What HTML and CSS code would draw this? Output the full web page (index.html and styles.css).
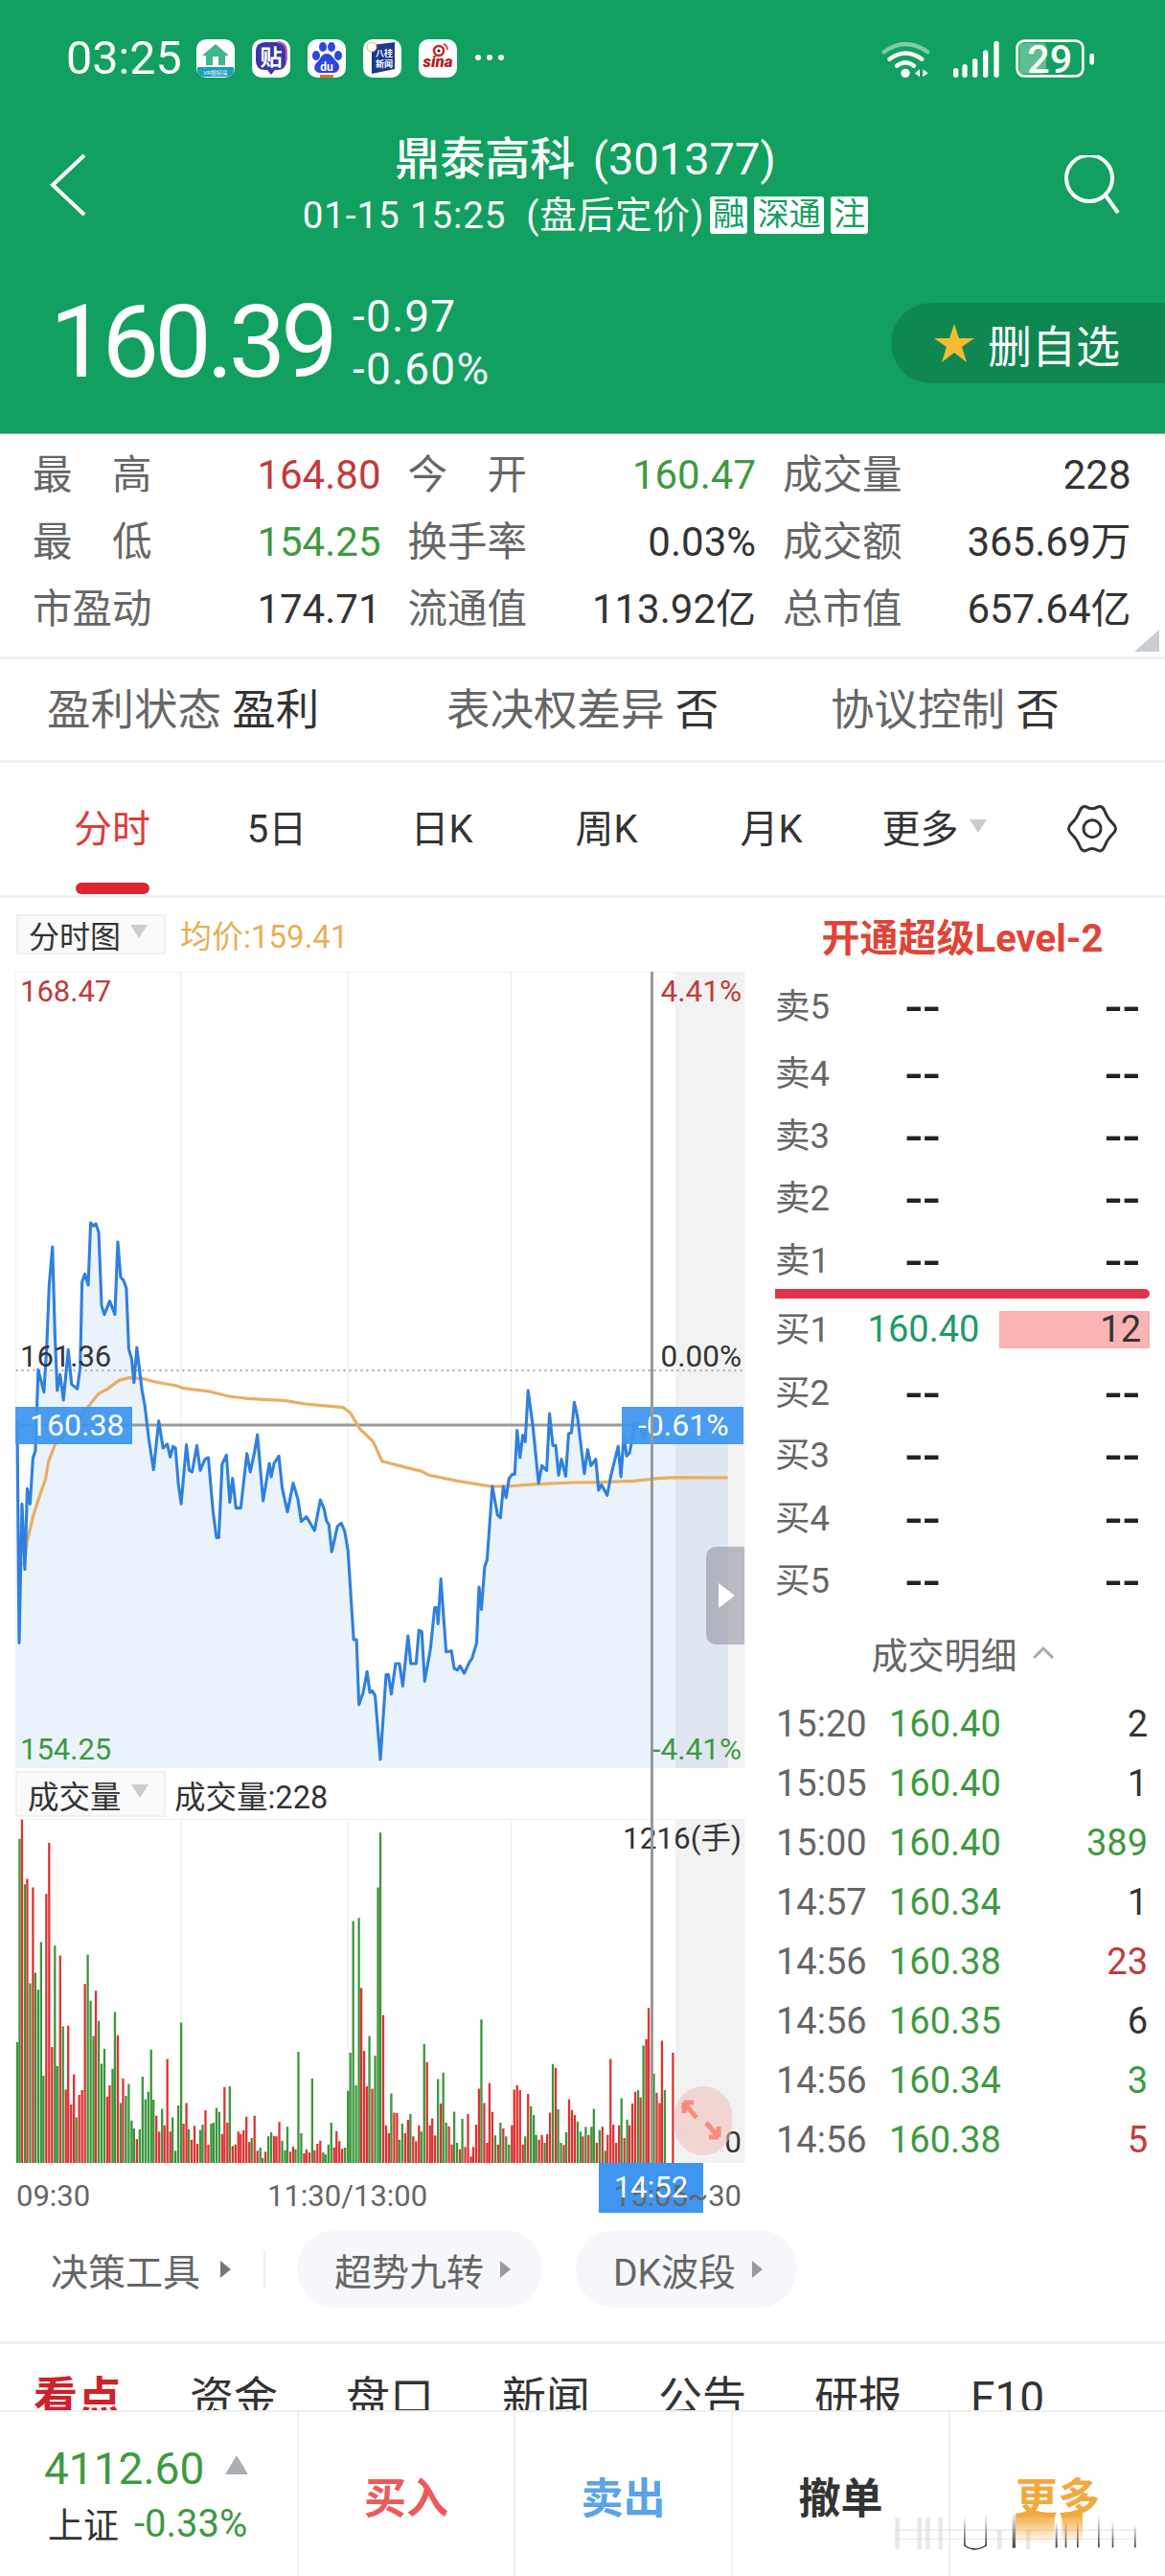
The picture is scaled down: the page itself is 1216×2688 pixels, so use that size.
FILE: index.html
```html
<!DOCTYPE html>
<html lang="zh-CN">
<head>
<meta charset="utf-8">
<title>鼎泰高科 (301377)</title>
<link rel="stylesheet" href="styles.css">
</head>
<body>
<div class="page">
  <header class="hero">
    <div class="status">
      <span class="clock">03:25</span>
      <div class="apps">
        <svg class="app" viewBox="0 0 40 40"><path d="M20 5 34 17H30V27H10V17H6Z" fill="#3DB58F"/><rect x="17" y="18" width="6" height="9" fill="#fff"/><path d="M1 29H39V32Q39 39 32 39H8Q1 39 1 32Z" fill="#1E9BBE"/><text class="app-tiny" x="20" y="37" text-anchor="middle">VR搜好房</text></svg>
        <svg class="app" viewBox="0 0 40 40"><path d="M14 3H26Q36 3 36 13V22Q36 32 26 32H24L20 37 16 32H14Q4 32 4 22V13Q4 3 14 3Z" fill="#3A37A8"/><path d="M26 3Q36 3 36 13V22" fill="none" stroke="#C65BC0" stroke-width="2"/><text class="app-tie" x="20" y="27" text-anchor="middle">贴</text></svg>
        <svg class="app" viewBox="0 0 40 40"><ellipse cx="9" cy="17" rx="4" ry="5" fill="#2F46DC"/><ellipse cx="16" cy="8" rx="4" ry="5" fill="#2F46DC"/><ellipse cx="25" cy="8" rx="4" ry="5" fill="#2F46DC"/><ellipse cx="32" cy="17" rx="4" ry="5" fill="#2F46DC"/><path d="M20 15C26 15 27 21 31 24 35 28 33 35 27 35H13C7 35 5 28 10 24 14 21 14 15 20 15Z" fill="#2F46DC"/><text class="app-du" x="20" y="33" text-anchor="middle">du</text><rect x="13" y="37" width="14" height="3" fill="#E86A3C"/></svg>
        <svg class="app" viewBox="0 0 40 40"><path d="M9 6 33 3V31L9 36Z" fill="#1B3A8C"/><circle cx="9" cy="8" r="5" fill="#fff" stroke="#E7B04A"/><text class="app-bg" x="22" y="18" text-anchor="middle">八桂</text><text class="app-bg" x="22" y="29" text-anchor="middle">新闻</text></svg>
        <svg class="app" viewBox="0 0 40 40"><circle cx="21" cy="12" r="5" fill="none" stroke="#C8242A" stroke-width="2.5"/><circle cx="21" cy="12" r="1.5" fill="#222"/><path d="M26 5Q30 6 30 11" fill="none" stroke="#C8242A" stroke-width="1.5"/><text class="app-sina" x="20" y="29" text-anchor="middle">sina</text></svg>
        <svg class="more-dots" viewBox="0 0 32 8"><circle cx="4" cy="4" r="3" fill="#fff"/><circle cx="16" cy="4" r="3" fill="#fff"/><circle cx="28" cy="4" r="3" fill="#fff"/></svg>
      </div>
      <svg class="sys" viewBox="0 0 780 180">
        <path d="M68 70Q135 20 205 70" fill="none" stroke="#7ECBA6" stroke-width="13" stroke-linecap="round"/>
        <path d="M85 92Q135 55 187 92" fill="none" stroke="#fff" stroke-width="13" stroke-linecap="round"/>
        <path d="M108 113Q135 92 162 113" fill="none" stroke="#fff" stroke-width="13" stroke-linecap="round"/>
        <circle cx="135" cy="136" r="14" fill="#fff"/>
        <path d="M180 124V148L165 136ZM190 124V148L206 136Z" fill="#fff"/>
        <rect x="285" y="120" width="16" height="30" rx="8" fill="#fff"/>
        <rect x="313" y="108" width="16" height="42" rx="8" fill="#fff"/>
        <rect x="345" y="90" width="16" height="60" rx="8" fill="#fff"/>
        <rect x="378" y="64" width="16" height="86" rx="8" fill="#fff"/>
        <rect x="412" y="35" width="16" height="115" rx="8" fill="#fff"/>
        <rect x="492" y="42" width="84" height="96" rx="12" fill="#5FBD91"/>
        <rect x="485" y="35" width="206" height="110" rx="22" fill="none" stroke="#fff" stroke-width="8"/>
        <text class="batt" x="587" y="135" text-anchor="middle">29</text>
        <rect x="712" y="74" width="14" height="36" rx="7" fill="#fff"/>
      </svg>
    </div>
    <div class="nav">
      <svg class="back" viewBox="0 0 40 66"><path d="M36 2 3 33 36 64" fill="none" stroke="#fff" stroke-width="4"/></svg>
      <div class="heading">
        <div class="title"><b>鼎泰高科</b> (301377)</div>
        <div class="sub">
          <span class="sub-text">01-15 15:25 &nbsp;(盘后定价)</span>
          <span class="badge badge-one">融</span>
          <span class="badge badge-two">深通</span>
          <span class="badge badge-one">注</span>
        </div>
      </div>
      <svg class="search" viewBox="0 0 60 66"><circle cx="27" cy="24" r="24" fill="none" stroke="#fff" stroke-width="4"/><path d="M44 42 57 60" fill="none" stroke="#fff" stroke-width="4"/></svg>
    </div>
    <div class="quote">
      <div class="price">160.39</div>
      <div class="change"><span>-0.97</span><span>-0.60%</span></div>
      <div class="fav">
        <svg class="star" viewBox="0 0 42 40"><path d="M21 0 26 15H42L29 24 34 40 21 30 8 40 13 24 0 15H16Z" fill="#F6BC2F"/></svg>
        <span>删自选</span>
      </div>
    </div>
  </header>

  <section class="metrics">
    <div class="metric"><span class="m-label">最　高</span><span class="red">164.80</span></div>
    <div class="metric"><span class="m-label">今　开</span><span class="green">160.47</span></div>
    <div class="metric"><span class="m-label">成交量</span><span>228</span></div>
    <div class="metric"><span class="m-label">最　低</span><span class="green">154.25</span></div>
    <div class="metric"><span class="m-label">换手率</span><span>0.03%</span></div>
    <div class="metric"><span class="m-label">成交额</span><span>365.69万</span></div>
    <div class="metric"><span class="m-label">市盈动</span><span>174.71</span></div>
    <div class="metric"><span class="m-label">流通值</span><span>113.92亿</span></div>
    <div class="metric"><span class="m-label">总市值</span><span>657.64亿</span></div>
    <i class="corner"></i>
  </section>

  <section class="tags">
    <div class="tag tag-a">盈利状态 <b>盈利</b></div>
    <div class="tag tag-b">表决权差异 <b>否</b></div>
    <div class="tag tag-c">协议控制 <b>否</b></div>
  </section>

  <nav class="periods">
    <div class="period active"><span>分时</span><i></i></div>
    <div class="period"><span>5日</span></div>
    <div class="period"><span>日K</span></div>
    <div class="period"><span>周K</span></div>
    <div class="period"><span>月K</span></div>
    <div class="period"><span class="period-more">更多<i class="tri-down"></i></span></div>
    <div class="period">
      <svg class="gear" viewBox="60 40 186 186"><path d="M168.500 65Q184 56 192.500 78 201 100 218 116 235 132 218 148 201 164 192.500 186 184 208 168.500 199 153 190 137.500 199 122 208 113.500 186 105 164 88 148 71 132 88 116 105 100 113.500 78 122 56 137.500 65 153 74 168.500 65Z" fill="none" stroke="#333" stroke-width="9"/><circle cx="153" cy="132" r="27" fill="none" stroke="#333" stroke-width="9"/></svg>
    </div>
  </nav>

  <main class="market">
    <div class="chart-col">
      <div class="c-head">
        <div class="c-select c-select-price">分时图<i class="tri-down"></i></div>
        <span class="avg">均价:159.41</span>
      </div>
      <div class="plot plot-price">
        <svg class="plot-svg" viewBox="32 39 1536 2493" preserveAspectRatio="none">
          <rect class="band" x="1417" y="39" width="146" height="2493"/>
          <path class="grid" d="M33 39V2532M380 39V2532M730 39V2532M1073 39V2532M33 40H1563M33 2531H1563"/>
          <rect class="band-fill" x="1417" y="1470" width="110" height="1062"/>
          <polygon class="area" points="36,1445 40,2140 46,1705 52,1910 57,1657 63,1705 69,1560 74,1540 80,1285 92,1355 98,1210 103,1020 110,900 115,1170 120,1350 126,1300 133,1380 143,1222 150,1330 162,1345 168,1280 172,1010 178,985 185,1020 190,825 196,835 201,828 207,855 213,1085 219,1112 230,1070 241,1112 247,885 253,995 259,1005 265,1030 270,1220 276,1250 281,1325 287,1215 293,1290 298,1350 304,1400 312,1500 322,1598 333,1445 342,1530 351,1518 357,1558 363,1525 368,1530 374,1640 380,1705 391,1520 397,1600 403,1605 413,1522 420,1600 430,1565 437,1560 447,1730 454,1810 459,1810 466,1580 475,1552 482,1700 488,1625 495,1718 505,1718 518,1547 525,1605 533,1550 540,1488 552,1695 565,1578 569,1620 575,1578 585,1555 592,1655 603,1730 615,1640 625,1690 632,1760 643,1745 660,1788 672,1692 680,1720 685,1758 690,1770 696,1855 708,1775 716,1765 723,1790 730,1850 742,2130 748,2130 753,2333 762,2295 770,2230 776,2295 781,2290 787,2305 798,2505 810,2240 815,2240 821,2300 830,2205 838,2205 845,2275 856,2118 862,2205 873,2205 879,2100 885,2105 891,2260 903,2160 912,2030 917,2030 919,2080 925,1940 936,2168 947,2165 953,2220 960,2225 965,2212 974,2235 985,2200 990,2190 1000,2140 1005,1965 1010,2035 1017,1900 1022,1880 1033,1650 1044,1740 1050,1748 1056,1650 1062,1685 1068,1625 1075,1612 1080,1612 1085,1475 1091,1560 1097,1490 1102,1510 1108,1350 1118,1460 1130,1640 1137,1585 1147,1600 1153,1422 1160,1522 1166,1522 1172,1615 1178,1565 1187,1618 1193,1485 1199,1482 1205,1387 1212,1435 1226,1610 1233,1535 1240,1585 1250,1565 1256,1662 1262,1645 1274,1678 1282,1615 1297,1525 1303,1620 1309,1490 1315,1555 1321,1545 1332,1455 1345,1458 1350,1498 1358,1455 1366,1470 1417,1470 1417,2532 33,2532 33,1445"/>
          <path class="dots" d="M33 1287H1563"/>
          <path class="cross" d="M33 1458H1366"/>
          <polyline class="avg-line" points="50,1900 57,1820 70,1740 85,1670 95,1630 102,1570 115,1520 125,1500 160,1460 185,1400 207,1360 225,1345 250,1318 270,1310 300,1313 325,1323 370,1335 385,1343 440,1353 480,1368 520,1375 600,1382 640,1392 720,1403 735,1420 755,1470 783,1510 802,1572 885,1603 900,1615 960,1633 1030,1650 1060,1650 1130,1643 1200,1638 1260,1637 1330,1633 1380,1625 1420,1622 1527,1623"/>
          <polyline class="price-line" points="36,1445 40,2140 46,1705 52,1910 57,1657 63,1705 69,1560 74,1540 80,1285 92,1355 98,1210 103,1020 110,900 115,1170 120,1350 126,1300 133,1380 143,1222 150,1330 162,1345 168,1280 172,1010 178,985 185,1020 190,825 196,835 201,828 207,855 213,1085 219,1112 230,1070 241,1112 247,885 253,995 259,1005 265,1030 270,1220 276,1250 281,1325 287,1215 293,1290 298,1350 304,1400 312,1500 322,1598 333,1445 342,1530 351,1518 357,1558 363,1525 368,1530 374,1640 380,1705 391,1520 397,1600 403,1605 413,1522 420,1600 430,1565 437,1560 447,1730 454,1810 459,1810 466,1580 475,1552 482,1700 488,1625 495,1718 505,1718 518,1547 525,1605 533,1550 540,1488 552,1695 565,1578 569,1620 575,1578 585,1555 592,1655 603,1730 615,1640 625,1690 632,1760 643,1745 660,1788 672,1692 680,1720 685,1758 690,1770 696,1855 708,1775 716,1765 723,1790 730,1850 742,2130 748,2130 753,2333 762,2295 770,2230 776,2295 781,2290 787,2305 798,2505 810,2240 815,2240 821,2300 830,2205 838,2205 845,2275 856,2118 862,2205 873,2205 879,2100 885,2105 891,2260 903,2160 912,2030 917,2030 919,2080 925,1940 936,2168 947,2165 953,2220 960,2225 965,2212 974,2235 985,2200 990,2190 1000,2140 1005,1965 1010,2035 1017,1900 1022,1880 1033,1650 1044,1740 1050,1748 1056,1650 1062,1685 1068,1625 1075,1612 1080,1612 1085,1475 1091,1560 1097,1490 1102,1510 1108,1350 1118,1460 1130,1640 1137,1585 1147,1600 1153,1422 1160,1522 1166,1522 1172,1615 1178,1565 1187,1618 1193,1485 1199,1482 1205,1387 1212,1435 1226,1610 1233,1535 1240,1585 1250,1565 1256,1662 1262,1645 1274,1678 1282,1615 1297,1525 1303,1620 1309,1490 1315,1555 1321,1545 1332,1455 1345,1458 1350,1498 1358,1455 1366,1470"/>
        </svg>
        <span class="pl pl-l pl-top red">168.47</span>
        <span class="pl pl-r pl-top red">4.41%</span>
        <span class="pl pl-l pl-mid">161.36</span>
        <span class="pl pl-r pl-mid">0.00%</span>
        <span class="pl pl-l pl-low green">154.25</span>
        <span class="pl pl-r pl-low green">-4.41%</span>
        <span class="cursor cursor-l">160.38</span>
        <span class="cursor cursor-r">-0.61%</span>
        <div class="collapse"><i></i></div>
      </div>
      <div class="c-head c-head-vol">
        <div class="c-select c-select-vol">成交量<i class="tri-down"></i></div>
        <span class="vol-val">成交量:228</span>
      </div>
      <div class="plot plot-vol">
        <svg class="plot-svg" viewBox="32 170 1536 1078" preserveAspectRatio="none">
          <rect class="band" x="1417" y="170" width="146" height="1078"/>
          <path class="grid" d="M380 170V1248M730 170V1248M1073 170V1248M33 171H1563"/>
          <path class="bars-g" d="M36 870V1248M41 232V1248M52 375V1248M63 685V1248M74 652V1248M80 705V1248M86 556V1248M91 975V1248M115 567V1248M120 945V1248M132 820V1248M160 1105V1248M184 596V1248M190 740V1248M196 850V1248M207 803V1248M213 937V1248M219 890V1248M236 953V1248M241 775V1248M253 1060V1248M264 1038V1248M270 1000V1248M276 1115V1248M281 1140V1248M293 1143V1248M299 978V1248M305 1048V1248M311 1025V1248M317 893V1248M322 1050V1248M340 1078V1248M362 1105V1248M368 1210V1248M374 1068V1248M380 808V1248M396 1142V1248M420 1145V1248M425 1128V1248M443 1125V1248M448 1122V1248M454 1075V1248M460 1088V1248M482 1008V1248M528 1170V1248M546 1200V1248M551 1232V1248M563 1165V1248M569 1152V1248M592 1178V1248M598 1208V1248M603 1135V1248M620 1205V1248M626 900V1248M632 1155V1248M655 984V1248M678 1215V1248M683 1222V1248M689 1190V1248M695 1122V1248M724 1200V1248M730 1022V1248M735 903V1248M741 490V1248M747 1005V1248M753 480V1248M775 850V1248M787 912V1248M793 385V1248M798 213V1248M821 1030V1248M838 1175V1248M844 1125V1248M861 1095V1248M884 1150V1248M890 875V1248M919 985V1248M930 965V1248M936 1122V1248M953 1087V1248M959 1185V1248M970 1110V1248M1010 798V1248M1039 1162V1248M1050 1122V1248M1062 1165V1248M1068 1190V1248M1102 1165V1248M1114 1070V1248M1120 1098V1248M1125 1160V1248M1143 1185V1248M1160 938V1248M1171 1080V1248M1177 1185V1248M1188 1152V1248M1212 1118V1248M1218 1150V1248M1229 1135V1248M1241 1135V1248M1246 1078V1248M1258 1145V1248M1270 1210V1248M1304 1045V1248M1316 1112V1248M1339 1020V1248M1350 880V1248M1367 878V1248M1372 968V1248M1395 1020V1248"/>
          <path class="bars-r" d="M46 172V1248M57 358V1248M69 385V1248M97 405V1248M103 245V1248M109 885V1248M126 598V1248M138 1018V1248M143 818V1248M149 1065V1248M155 970V1248M166 1035V1248M172 1020V1248M178 687V1248M201 708V1248M225 1040V1248M230 1005V1248M247 848V1248M258 983V1248M287 1173V1248M328 1100V1248M334 1150V1248M345 1130V1248M351 922V1248M357 1150V1248M385 1125V1248M391 1060V1248M402 1175V1248M408 1132V1248M414 1188V1248M431 1083V1248M437 1190V1248M466 1158V1248M471 1010V1248M477 1122V1248M488 1195V1248M494 1190V1248M500 1150V1248M505 1158V1248M511 1145V1248M517 1103V1248M523 1183V1248M534 1100V1248M540 1210V1248M557 1213V1248M575 1163V1248M580 1165V1248M586 1120V1248M609 1213V1248M615 1197V1248M638 1218V1248M643 1205V1248M649 1215V1248M660 1208V1248M666 1188V1248M672 1178V1248M701 1200V1248M706 1148V1248M712 1180V1248M718 1203V1248M758 700V1248M764 897V1248M770 1008V1248M781 1015V1248M804 785V1248M810 1130V1248M816 1155V1248M827 1090V1248M833 1092V1248M850 1155V1248M856 1113V1248M867 1165V1248M873 1180V1248M879 1130V1248M896 932V1248M902 1130V1248M907 1108V1248M913 1162V1248M925 1062V1248M942 1133V1248M948 1190V1248M965 1205V1248M976 1198V1248M982 1095V1248M988 1228V1248M993 1198V1248M999 1128V1248M1005 1015V1248M1016 1060V1248M1022 1185V1248M1027 997V1248M1033 1088V1248M1045 1190V1248M1056 1140V1248M1074 1130V1248M1079 1018V1248M1085 1005V1248M1091 1020V1248M1097 1190V1248M1108 1032V1248M1131 1175V1248M1137 1160V1248M1148 1158V1248M1154 1090V1248M1166 950V1248M1183 1192V1248M1194 1048V1248M1200 1082V1248M1206 1098V1248M1223 1165V1248M1235 1160V1248M1252 1185V1248M1264 1135V1248M1275 1160V1248M1281 922V1248M1287 1128V1248M1293 1185V1248M1299 1130V1248M1310 1170V1248M1321 1130V1248M1327 1062V1248M1333 1025V1248M1344 1043V1248M1356 860V1248M1361 762V1248M1378 1028V1248M1384 1060V1248M1389 865V1248M1412 903V1248"/>
        </svg>
        <span class="pl pl-r pl-vmax">1216(手)</span>
        <span class="pl pl-r pl-vmin">0</span>
        <div class="expand">
          <svg viewBox="0 0 60 72"><path d="M10 17 23 33M10 17V28M10 17H20M46 53 33 38M46 53V42M46 53H36" fill="none" stroke="#F98A80" stroke-width="5"/></svg>
        </div>
      </div>
      <div class="axis">
        <i class="axis-box"></i>
        <span class="axis-a">09:30</span>
        <span class="axis-b">11:30/13:00</span>
        <span class="axis-c">15:05~30</span>
        <span class="axis-now">14:52</span>
      </div>
      <i class="vline"></i>
    </div>

    <aside class="book">
      <div class="book-head">开通超级Level-2</div>
      <div class="bk bk-first"><span>卖5</span><span class="dash">--</span><span class="qty dash">--</span></div>
      <div class="bk"><span>卖4</span><span class="dash">--</span><span class="qty dash">--</span></div>
      <div class="bk"><span>卖3</span><span class="dash">--</span><span class="qty dash">--</span></div>
      <div class="bk"><span>卖2</span><span class="dash">--</span><span class="qty dash">--</span></div>
      <div class="bk"><span>卖1</span><span class="dash">--</span><span class="qty dash">--</span></div>
      <i class="book-split"></i>
      <div class="bk bk-buy"><span>买1</span><span class="bid">160.40</span><span class="qty qty-bar">12</span></div>
      <div class="bk bk-buy"><span>买2</span><span class="dash">--</span><span class="qty dash">--</span></div>
      <div class="bk bk-buy"><span>买3</span><span class="dash">--</span><span class="qty dash">--</span></div>
      <div class="bk bk-buy"><span>买4</span><span class="dash">--</span><span class="qty dash">--</span></div>
      <div class="bk bk-buy"><span>买5</span><span class="dash">--</span><span class="qty dash">--</span></div>
      <div class="deal-head">成交明细<svg viewBox="0 0 22 13"><path d="M1 12 11 2 21 12" fill="none" stroke="#aaa" stroke-width="3"/></svg></div>
      <div class="deal"><span class="d-time">15:20</span><span class="green">160.40</span><span class="d-qty">2</span></div>
      <div class="deal"><span class="d-time">15:05</span><span class="green">160.40</span><span class="d-qty">1</span></div>
      <div class="deal"><span class="d-time">15:00</span><span class="green">160.40</span><span class="d-qty green">389</span></div>
      <div class="deal"><span class="d-time">14:57</span><span class="green">160.34</span><span class="d-qty">1</span></div>
      <div class="deal"><span class="d-time">14:56</span><span class="green">160.38</span><span class="d-qty red">23</span></div>
      <div class="deal"><span class="d-time">14:56</span><span class="green">160.35</span><span class="d-qty">6</span></div>
      <div class="deal"><span class="d-time">14:56</span><span class="green">160.34</span><span class="d-qty green">3</span></div>
      <div class="deal"><span class="d-time">14:56</span><span class="green">160.38</span><span class="d-qty red">5</span></div>
    </aside>
  </main>

  <section class="tools">
    <div class="tool-label">决策工具<i class="tri-right"></i></div>
    <i class="tool-sep"></i>
    <div class="pill pill-a">超势九转<i class="tri-right"></i></div>
    <div class="pill pill-b">DK波段<i class="tri-right"></i></div>
  </section>

  <nav class="news">
    <span class="news-on">看点</span><span>资金</span><span>盘口</span><span>新闻</span><span>公告</span><span>研报</span><span>F10</span>
  </nav>

  <footer class="bar">
    <div class="index">
      <div class="idx-top"><span class="green">4112.60</span><i class="tri-up"></i></div>
      <div class="idx-bot"><span class="idx-name">上证</span><span class="green">-0.33%</span></div>
    </div>
    <div class="act act-buy">买入</div>
    <div class="act act-sell">卖出</div>
    <div class="act act-cancel">撤单</div>
    <div class="act act-more">更多</div>
    <svg class="mark" viewBox="0 0 948 384">
      <defs>
        <linearGradient id="fadeO" x1="0" y1="0" x2="0" y2="1"><stop offset="0" stop-color="#F3A83C"/><stop offset="1" stop-color="#F3A83C" stop-opacity="0"/></linearGradient>
        <linearGradient id="fadeK" x1="0" y1="0" x2="0" y2="1"><stop offset="0" stop-color="#222" stop-opacity=".05"/><stop offset="1" stop-color="#222" stop-opacity=".85"/></linearGradient>
      </defs>
      <path d="M110 200V300M180 200V300M205 200V300M245 200V300M430 240V300M520 240V300" stroke="#ccc" stroke-width="14" opacity=".45" fill="none"/>
      <path d="M100 240H860M100 268H860" stroke="#ddd" stroke-width="4" opacity=".6" fill="none"/>
      <rect x="480" y="188" width="122" height="95" fill="url(#fadeO)"/>
      <rect x="625" y="188" width="65" height="95" fill="url(#fadeO)"/>
      <rect x="318" y="200" width="5" height="90" fill="url(#fadeK)"/>
      <rect x="385" y="195" width="5" height="95" fill="url(#fadeK)"/>
      <path d="M320 288Q352 312 388 288" fill="none" stroke="#222" stroke-width="4"/>
      <rect x="470" y="190" width="10" height="106" fill="url(#fadeK)"/>
      <rect x="605" y="215" width="6" height="80" fill="url(#fadeK)"/>
      <rect x="635" y="215" width="5" height="80" fill="url(#fadeK)"/>
      <rect x="672" y="215" width="5" height="80" fill="url(#fadeK)"/>
      <rect x="738" y="195" width="5" height="100" fill="url(#fadeK)"/>
      <rect x="782" y="215" width="5" height="80" fill="url(#fadeK)"/>
      <rect x="852" y="225" width="5" height="70" fill="url(#fadeK)"/>
    </svg>
  </footer>
</div>
</body>
</html>
```

FILE: styles.css
```css
* { box-sizing: border-box; }
html, body { margin: 0; padding: 0; background: #fff; }
body { font-family: Roboto, "Noto Sans CJK SC", sans-serif; color: #333; }
i { font-style: normal; display: block; }
.page { position: relative; width: 1216px; height: 2688px; overflow: hidden; background: #fff; }
.red { color: #C23A3A; }
.green { color: #3C9A40; }

/* hero */
.hero { height: 452px; background: #11A05F; color: #fff; padding-top: 41px; box-shadow: 0 1px 0 #8aa79a; position: relative; z-index: 1; }
.status { display: flex; align-items: center; height: 40px; padding-left: 69px; }
.clock { font-size: 48.5px; line-height: 40px; width: 136px; }
.apps { display: flex; align-items: center; gap: 18px; }
.app { width: 40px; height: 40px; background: #fff; border-radius: 10px; }
.more-dots { width: 32px; height: 8px; align-self: center; margin-top: -2px; }
.sys { width: 260px; height: 60px; margin-left: auto; margin-right: 56px; }
.app-tiny { font-size: 6px; fill: #fff; }
.app-tie { font-size: 23px; fill: #fff; font-weight: 700; }
.app-du { font-size: 12px; fill: #fff; font-weight: 700; }
.app-bg { font-size: 9px; fill: #fff; font-weight: 700; }
.app-sina { font-size: 17px; fill: #B01E23; font-weight: 900; font-style: italic; }
.batt { font-size: 124px; fill: #fff; font-weight: 500; }

.nav { display: grid; grid-template-columns: 1fr auto 1fr; margin-top: 62px; padding: 0 46px 0 52px; height: 101px; }
.back { width: 40px; height: 66px; margin-top: 17px; }
.search { width: 60px; height: 66px; margin-top: 19px; justify-self: end; }
.heading { text-align: center; }
.title { font-size: 47px; line-height: 45px; height: 45px; white-space: nowrap; word-spacing: 7px; }
.title b { font-weight: 500; }
.sub { display: flex; align-items: center; gap: 7px; height: 39px; margin-top: 17px; font-size: 38.5px; line-height: 39px; white-space: nowrap; }
.sub-text { letter-spacing: .9px; margin-right: -1px; }
.badge { display: block; height: 39px; background: #fff; color: #11A05F; font-size: 33px; line-height: 38px; text-align: center; border-radius: 3px; }
.badge-one { width: 39px; }
.badge-two { width: 73px; }

.quote { display: flex; align-items: center; height: 89px; margin-top: 69px; padding-left: 52px; }
.price { font-size: 106px; line-height: 89px; letter-spacing: -5px; width: 316px; }
.change { display: flex; flex-direction: column; font-size: 46px; line-height: 55px; letter-spacing: 1.2px; }
.fav { display: flex; align-items: center; margin-left: auto; width: 286px; height: 84px; padding-left: 45px; background: #0E8850; border-radius: 42px 0 0 42px; font-size: 46px; }
.star { width: 42px; height: 40px; margin-right: 14px; }

/* metrics */
.metrics { position: relative; height: 236px; padding: 9px 35px 0 34px; display: grid; grid-template-columns: repeat(3, 363.500px); grid-auto-rows: 70px; column-gap: 28px; border-bottom: 3px solid #f2f2f2; font-size: 42px; }
.metric { display: flex; align-items: center; justify-content: space-between; line-height: 70px; white-space: nowrap; }
.m-label { color: #666; font-size: 41.5px; }
.corner { position: absolute; right: 6px; bottom: 5px; width: 26px; height: 23px; background: #C9CED4; clip-path: polygon(100% 0, 100% 100%, 0 100%); }

/* tags */
.tags { position: relative; height: 108px; border-bottom: 3px solid #f2f2f2; display: grid; grid-template-columns: 417px 401px 1fr; padding: 0 0 7px 49px; align-items: center; font-size: 45.5px; color: #666; }
.tag { white-space: nowrap; }
.tag b { font-weight: 400; color: #333; }

/* periods */
.periods { display: grid; grid-template-columns: repeat(6, 172px) 1fr; height: 141px; padding: 44px 0 0 31px; border-bottom: 3px solid #f0f0f0; font-size: 40px; }
.period { display: flex; flex-direction: column; align-items: center; }
.period span { line-height: 52px; height: 52px; white-space: nowrap; }
.period.active { color: #E03A3A; }
.period.active i { width: 77px; height: 12px; margin-top: 29px; border-radius: 6px; background: #E0242F; }
.period-more { display: flex; align-items: center; margin-left: -4px; }
.tri-down { width: 0; height: 0; border-left: 9px solid transparent; border-right: 9px solid transparent; border-top: 14px solid #ccc; margin-left: 11px; margin-top: -8px; }
.gear { width: 62px; height: 62px; margin-top: -6px; }

/* market */
.market { display: flex; padding-left: 16px; height: 1374px; }
.chart-col { position: relative; width: 764px; padding-top: 17px; flex: none; }
.c-head { display: flex; align-items: center; height: 42px; white-space: nowrap; }
.c-select { display: flex; align-items: center; background: #fafafa; color: #333; box-shadow: inset 0 0 0 2px #f0f0f0; }
.c-select-price { width: 156px; height: 42px; margin-left: 1px; padding-left: 13px; font-size: 32px; }
.c-select-vol { width: 157px; height: 48px; padding-left: 13px; font-size: 32.5px; }
.c-select .tri-down { margin-top: -6px; margin-left: 10px; }
.avg { margin-left: 15px; font-size: 33px; color: #E8AE55; }
.c-head-vol { height: 48px; margin-top: 3px; }
.vol-val { margin-left: 9px; font-size: 32.5px; }
.plot { position: relative; }
.plot-price { height: 831px; margin-top: 18px; }
.plot-vol { height: 359px; margin-top: 2px; }
.plot-svg { display: block; width: 100%; height: 100%; }
.band { fill: #F2F2F2; }
.band-fill { fill: #DFE6F1; }
.grid { fill: none; stroke: #f0f0f0; stroke-width: 1.5; vector-effect: non-scaling-stroke; }
.area { fill: #EAF2FC; }
.dots { fill: none; stroke: #aaa; stroke-width: 2; stroke-dasharray: 2 4; vector-effect: non-scaling-stroke; }
.cross { fill: none; stroke: #999; stroke-width: 3; vector-effect: non-scaling-stroke; }
.avg-line { fill: none; stroke: #E9AE62; stroke-width: 3.2; vector-effect: non-scaling-stroke; }
.price-line { fill: none; stroke: #2F80DE; stroke-width: 3.1; stroke-linejoin: round; vector-effect: non-scaling-stroke; }
.bars-g { fill: none; stroke: #3A963A; stroke-width: 2.3; vector-effect: non-scaling-stroke; }
.bars-r { fill: none; stroke: #DE3232; stroke-width: 2.3; vector-effect: non-scaling-stroke; }
.pl { position: absolute; font-size: 31px; line-height: 36px; }
.pl-l { left: 5px; }
.pl-r { right: 6px; font-size: 31.5px; }
.pl-top { top: 3px; }
.pl-mid { top: 384px; }
.pl-low { top: 794px; }
.pl-vmax { top: 3px; }
.pl-vmin { top: 320px; }
.cursor { position: absolute; top: 454px; height: 39px; background: rgba(62, 150, 240, .94); color: #fff; font-size: 32px; line-height: 39px; }
.cursor-l { left: 0; width: 122px; padding-left: 15px; }
.cursor-r { left: 633px; width: 127px; padding-left: 17px; }
.collapse { position: absolute; left: 721px; top: 600px; width: 40px; height: 102px; border-radius: 10px 0 0 10px; background: rgba(150, 155, 165, .65); display: flex; align-items: center; padding-left: 13px; }
.collapse i { width: 0; height: 0; border-top: 13px solid transparent; border-bottom: 13px solid transparent; border-left: 17px solid #fff; }
.expand { position: absolute; left: 688px; top: 279px; width: 60px; height: 72px; border-radius: 30px; background: rgba(240, 190, 185, .55); }
.expand svg { display: block; width: 60px; height: 72px; }
.axis { position: relative; height: 54px; font-size: 31px; line-height: 36px; color: #666; }
.axis span { position: absolute; top: 17px; white-space: nowrap; }
.axis-a { left: 1px; }
.axis-b { left: 263px; }
.axis-c { right: 6px; }
.axis-box { position: absolute; left: 609px; top: 0; width: 109px; height: 52px; background: #3E96F0; }
.axis .axis-now { left: 609px; top: 8px; width: 109px; color: #fff; text-align: center; }
.vline { position: absolute; left: 663px; top: 77px; width: 2.5px; height: 1243px; background: #999; }

/* order book */
.book { width: 391px; margin-left: 29px; flex: none; font-size: 38px; }
.book-head { height: 81px; padding-top: 5px; text-align: center; font-size: 40px; line-height: 76px; font-weight: 700; color: #E04437; white-space: nowrap; }
.bk { display: grid; grid-template-columns: 96px 118px 20px 1fr; grid-template-rows: 39px; align-content: center; height: 65px; color: #666; font-size: 36.5px; line-height: 39px; align-items: center; }
.bk-first { margin-bottom: 5px; }
.bk-buy { height: 65.500px; }
.dash { display: block; font-size: 60px; font-weight: 400; color: #222; text-align: center; line-height: 39px; letter-spacing: 2px; }
.qty { grid-column: 4; text-align: right; padding-right: 9px; }
.qty-bar { background: #FBB3B3; color: #333; font-size: 38px; height: 39px; }
.bid { color: #1E9B68; font-size: 38px; text-align: center; }
.book-split { height: 10px; margin-top: -3px; border-radius: 0 5px 5px 0; background: #E0344A; }
.deal-head { display: flex; align-items: center; justify-content: center; gap: 16px; height: 60px; margin-top: 12px; margin-bottom: 13px; font-size: 38px; color: #666; white-space: nowrap; }
.deal-head svg { width: 22px; height: 13px; }
.deal { display: flex; height: 62px; align-items: center; font-size: 38px; padding-left: 1px; }
.d-time { width: 118px; color: #666; }
.d-qty { margin-left: auto; padding-right: 2px; }
.d-qty:not(.green):not(.red) { color: #333; }

/* tools */
.tools { display: flex; align-items: center; height: 81px; margin-top: 16px; padding-left: 53px; font-size: 39px; color: #666; white-space: nowrap; }
.tool-label { display: flex; align-items: center; width: 222px; }
.tri-right { width: 0; height: 0; border-top: 9px solid transparent; border-bottom: 9px solid transparent; border-left: 11px solid #777; }
.tool-label .tri-right { margin-left: 21px; }
.tool-sep { width: 2px; height: 40px; background: #eee; }
.pill { display: flex; align-items: center; height: 81px; border-radius: 40px; background: #F5F7FA; padding-left: 39px; }
.pill .tri-right { margin-left: 17px; border-left-color: #999; }
.pill-a { width: 256px; margin-left: 33px; }
.pill-b { width: 231px; margin-left: 35px; }

/* news tabs */
.news { display: grid; grid-template-columns: repeat(7, 163px); height: 110px; margin-top: 35px; padding: 33px 0 0 35px; border-top: 3px solid #f0f0f0; font-size: 46px; line-height: 46px; color: #333; }
.news-on { color: #D0202A; font-weight: 700; }

/* bottom bar */
.bar { position: absolute; left: 0; right: 0; bottom: 0; height: 173px; background: #fff; border-top: 2px solid #eee; display: grid; grid-template-columns: 310px 226px 227px 227px 1fr; }
.index { padding: 36px 0 0 46px; }
.idx-top { display: flex; align-items: center; height: 46px; font-size: 46px; }
.tri-up { width: 0; height: 0; margin-left: 22px; margin-top: -8px; border-left: 12px solid transparent; border-right: 12px solid transparent; border-bottom: 20px solid #A9AFB7; }
.idx-bot { display: flex; align-items: center; height: 46px; margin-top: 11px; font-size: 40px; white-space: nowrap; }
.idx-name { width: 94px; font-size: 37px; color: #333; padding-left: 4px; }
.act { border-left: 2px solid #f0f0f0; padding-top: 68px; text-align: center; font-size: 44px; line-height: 46px; font-weight: 700; }
.act-buy { color: #EC5A5A; }
.act-sell { color: #5BA3E6; }
.act-cancel { color: #333; }
.act-more { color: #F3A83C; }
.mark { position: absolute; left: 900px; top: 43px; width: 316px; height: 128px; }
```
